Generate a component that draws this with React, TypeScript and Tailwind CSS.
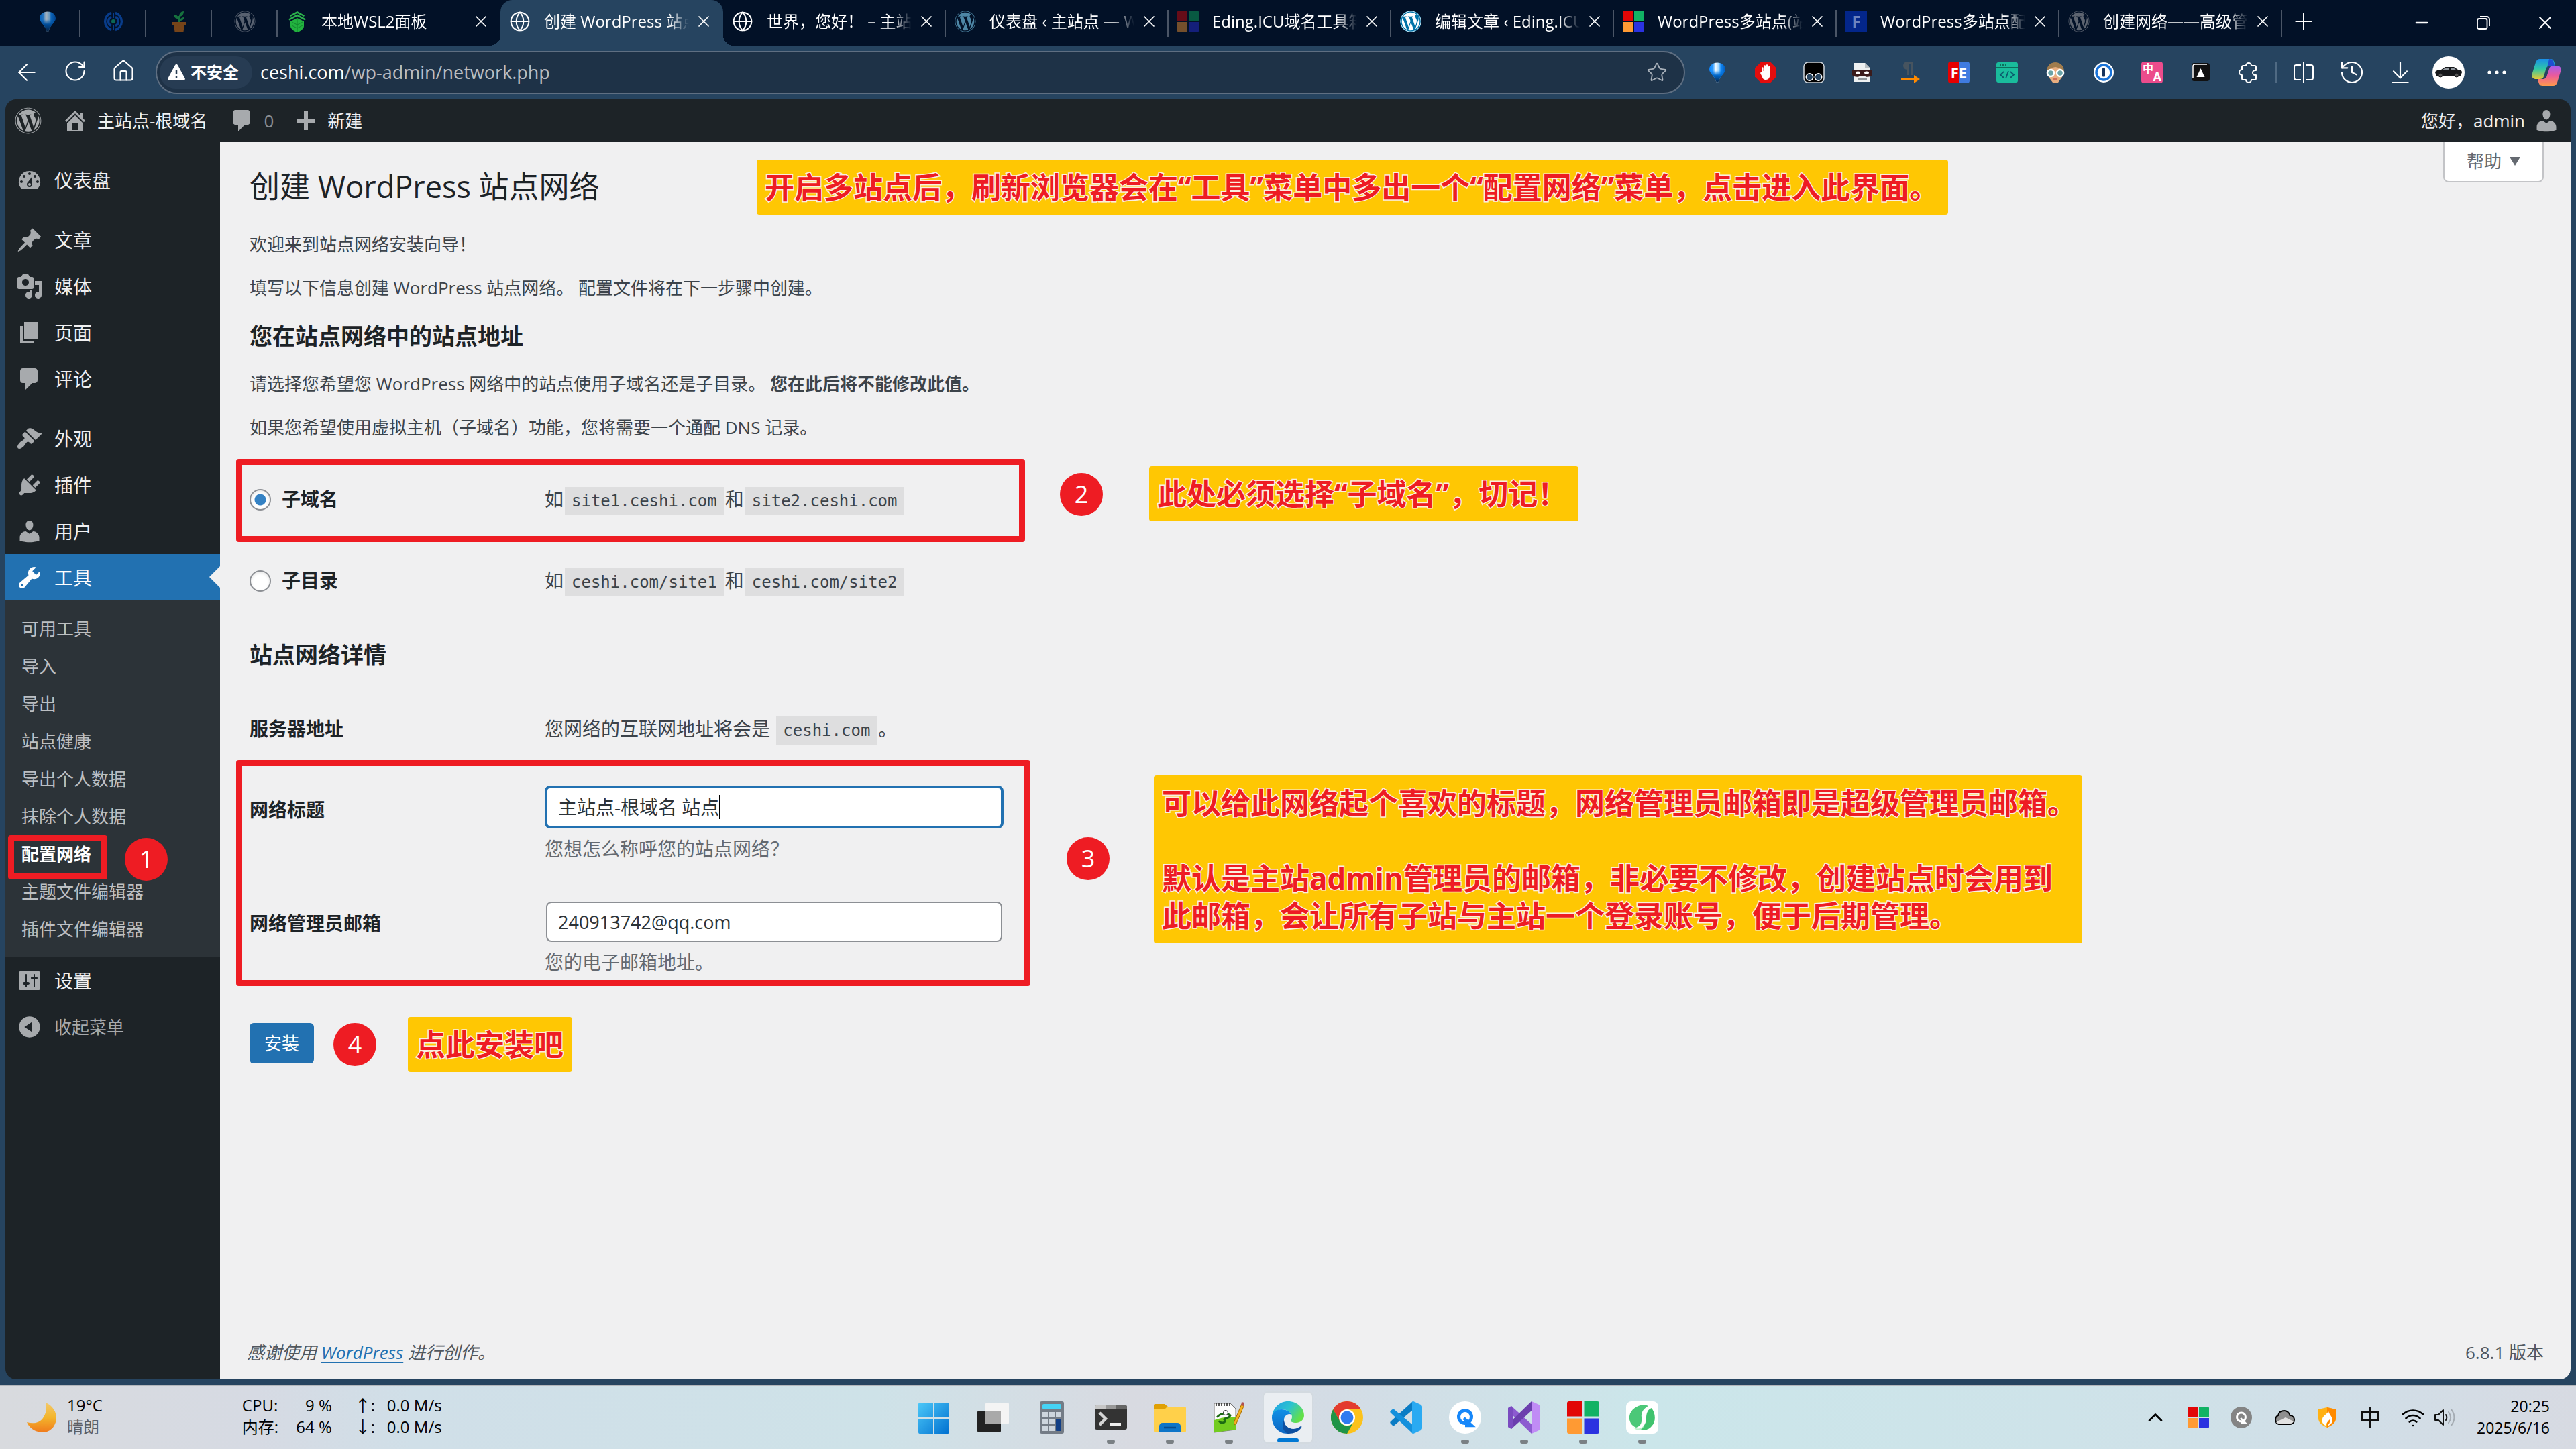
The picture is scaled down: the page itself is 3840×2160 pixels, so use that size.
import React from "react";
import { FaWordpress } from "react-icons/fa";
import { ArrowLeft, RotateCw, Home, Globe, X, Plus, Star, History, ArrowDownToLine, Minus, ChevronUp, Wifi } from "lucide-react";

const SANS = "font-['Open_Sans','Noto_Sans_CJK_SC',sans-serif]";

/* ---------- admin glyphs, 20 x 20 grid ---------- */
const G = {
  dashboard:
    "M3.76 16h12.48A7.998 7.998 0 0 0 10 3a7.998 7.998 0 0 0-6.24 13zM10 4c.55 0 1 .45 1 1s-.45 1-1 1-1-.45-1-1 .45-1 1-1zM6 6c.55 0 1 .45 1 1s-.45 1-1 1-1-.45-1-1 .45-1 1-1zm8 0c.55 0 1 .45 1 1s-.45 1-1 1-1-.45-1-1 .45-1 1-1zm-5.37 5.55L12 7v6c0 1.1-.9 2-2 2s-2-.9-2-2c0-.57.24-1.08.63-1.45zM4 10c.55 0 1 .45 1 1s-.45 1-1 1-1-.45-1-1 .45-1 1-1zm12 0c.55 0 1 .45 1 1s-.45 1-1 1-1-.45-1-1 .45-1 1-1zm-5 3c0-.55-.45-1-1-1s-1 .45-1 1 .45 1 1 1 1-.45 1-1z",
  post: "M10.44 3.02l1.82-1.82 6.36 6.35-1.83 1.82c-1.05-.68-2.48-.57-3.41.36l-.75.75c-.92.93-1.04 2.35-.35 3.41l-1.83 1.82-2.41-2.41-2.8 2.79c-.42.42-3.38 2.71-3.8 2.29s1.86-3.39 2.28-3.81l2.79-2.79L4.1 9.36l1.83-1.82c1.05.69 2.48.57 3.4-.36l.75-.75c.93-.92 1.05-2.35.36-3.41z",
  media:
    "M13 11V4c0-.55-.45-1-1-1h-1.67L9 1H5L3.67 3H2c-.55 0-1 .45-1 1v7c0 .55.45 1 1 1h10c.55 0 1-.45 1-1zM7 4.5c1.38 0 2.5 1.12 2.5 2.5S8.38 9.5 7 9.5 4.5 8.38 4.5 7 5.62 4.5 7 4.5zM14 6h5v10.5c0 1.38-1.12 2.5-2.5 2.5S14 17.88 14 16.5s1.12-2.5 2.5-2.5c.17 0 .34.02.5.05V9h-3V6zm-4 8.05V13h2v3.5c0 1.38-1.12 2.5-2.5 2.5S7 17.88 7 16.5 8.12 14 9.5 14c.17 0 .34.02.5.05z",
  page: "M6 15V2h10v13H6zm-1 1h8v2H3V5h2v11z",
  comments: "M5 2h9c1.1 0 2 .9 2 2v7c0 1.1-.9 2-2 2h-2l-5 5v-5H5c-1.1 0-2-.9-2-2V4c0-1.1.9-2 2-2z",
  appearance:
    "M14.48 11.06L7.41 3.99l1.5-1.5c.5-.56 2.3-.47 3.51.32 1.21.8 1.43 1.28 2.91 2.1 1.18.64 2.45 1.26 4.45.85zm-.71.71L6.7 4.7 4.93 6.47c-.39.39-.39 1.02 0 1.41l1.06 1.06c.39.39.39 1.03 0 1.42-.6.6-1.43 1.11-2.21 1.69-.35.26-.7.53-1.01.84C1.43 14.23.4 16.08 1.4 17.07c.99 1 2.84-.03 4.18-1.36.31-.31.58-.66.85-1.02.57-.78 1.08-1.61 1.69-2.21.39-.39 1.02-.39 1.41 0l1.06 1.06c.39.39 1.02.39 1.41 0z",
  plugins:
    "M13.11 4.36L9.87 7.6 8 5.73l3.24-3.24c.35-.34 1.05-.2 1.56.32.52.51.66 1.21.31 1.55zm-8 1.77l.91-1.12 9.01 9.01-1.19.84c-.71.71-2.63 1.16-3.82 1.16H6.14L4.9 17.26c-.59.59-1.54.59-2.12 0-.59-.58-.59-1.53 0-2.12l1.24-1.24v-3.88c0-1.13.4-3.19 1.09-3.89zm7.26 3.97l3.24-3.24c.34-.35 1.04-.21 1.55.31.52.51.66 1.21.31 1.55l-3.24 3.25z",
  users:
    "M10 9.25c-2.27 0-2.73-3.44-2.73-3.44C7 4.02 7.82 2 9.97 2c2.16 0 2.98 2.02 2.71 3.81 0 0-.41 3.44-2.68 3.44zm0 2.57L12.72 10c2.39 0 4.52 2.33 4.52 4.53v2.49s-3.65 1.13-7.24 1.13c-3.65 0-7.24-1.13-7.24-1.13v-2.49c0-2.25 1.94-4.48 4.47-4.48z",
  tools:
    "M16.68 9.77c-1.34 1.34-3.3 1.67-4.95.99l-5.41 6.52c-.99.99-2.59.99-3.58 0s-.99-2.59 0-3.57l6.52-5.42c-.68-1.65-.35-3.61.99-4.95 1.28-1.28 3.12-1.62 4.72-1.06l-2.89 2.89 2.82 2.82 2.86-2.87c.53 1.58.18 3.39-1.08 4.65zM3.81 16.21c.4.39 1.04.39 1.43 0 .4-.4.4-1.04 0-1.43-.39-.4-1.03-.4-1.43 0-.39.39-.39 1.03 0 1.43z",
  settings:
    "M18 16V4c0-.55-.45-1-1-1H3c-.55 0-1 .45-1 1v12c0 .55.45 1 1 1h14c.55 0 1-.45 1-1zM8 11h1c.55 0 1 .45 1 1s-.45 1-1 1H8v1.5c0 .28-.22.5-.5.5s-.5-.22-.5-.5V13H6c-.55 0-1-.45-1-1s.45-1 1-1h1V5.5c0-.28.22-.5.5-.5s.5.22.5.5V11zm5-2h-1c-.55 0-1-.45-1-1s.45-1 1-1h1V5.5c0-.28.22-.5.5-.5s.5.22.5.5V7h1c.55 0 1 .45 1 1s-.45 1-1 1h-1v5.5c0 .28-.22.5-.5.5s-.5-.22-.5-.5V9z",
  collapse:
    "M10 2.16c4.33 0 7.84 3.51 7.84 7.84s-3.51 7.84-7.84 7.84S2.16 14.33 2.16 10 5.71 2.16 10 2.16zm2 11.72V6.12L6.18 9.97z",
  home: "M16 8.5l1.53 1.53-1.06 1.06L10 4.6l-6.47 6.47-1.06-1.06L10 2.5l4 4v-2h2v4zm-6-2.46l6 5.99V18H4v-5.97zM12 17v-5H8v5h4z",
  plus: "M17 8.5v3h-5.5V17h-3v-5.5H3v-3h5.5V3h3v5.5z",
};

function Dash({ d, className = "" }: { d: string; className?: string }) {
  return (
    <svg viewBox="0 0 20 20" className={`size-10 shrink-0 ${className}`} fill="currentColor" fillRule="evenodd" aria-hidden="true">
      <path d={d} />
    </svg>
  );
}

/* ---------- small coloured artwork ---------- */
function Balloon() {
  return (
    <svg viewBox="0 0 32 32" className="size-8">
      <defs>
        <linearGradient id="bal" x1="0" x2="1">
          <stop offset="0" stopColor="#0a84ff" />
          <stop offset=".22" stopColor="#2b9bff" />
          <stop offset=".4" stopColor="#f2faff" />
          <stop offset=".6" stopColor="#9ad4ff" />
          <stop offset=".72" stopColor="#1288f5" />
          <stop offset="1" stopColor="#0057b8" />
        </linearGradient>
        <linearGradient id="balTail" x1="0" x2="0" y1="0" y2="1">
          <stop offset=".4" stopColor="#0074e0" stopOpacity="0" />
          <stop offset=".65" stopColor="#0068cc" />
          <stop offset="1" stopColor="#08284c" />
        </linearGradient>
      </defs>
      <path d="M16 1.500c7 0 12 4.500 12 10 0 6-8 9-10.500 19h-3C12 20.500 4 17.500 4 11.500c0-5.500 5-10 12-10z" fill="url(#bal)" />
      <path d="M16 1.500c7 0 12 4.500 12 10 0 6-8 9-10.500 19h-3C12 20.500 4 17.500 4 11.500c0-5.500 5-10 12-10z" fill="url(#balTail)" />
    </svg>
  );
}
function Rings() {
  return (
    <svg viewBox="0 0 32 32" className="size-8" fill="none" stroke="#0b4fb5" strokeWidth="3.4">
      <path d="M13 3.5A13 13 0 0 0 13 28.500M19 3.500A13 13 0 0 1 19 28.500" />
      <path d="M13 9.500a7 7 0 0 0 0 13M19 9.500a7 7 0 0 1 0 13" />
      <circle cx="16" cy="16" r="3" fill="#0e8d6a" stroke="none" />
      <path d="M16 3v8M16 21v8" strokeWidth="2" />
    </svg>
  );
}
function PlantPot() {
  return (
    <svg viewBox="0 0 32 32" className="size-8">
      <path d="M6 17h20v4h-2l-1.500 10h-13L8 21H6z" fill="#a85a14" />
      <path d="M16 17V8" stroke="#1f9a48" strokeWidth="2" />
      <path d="M16 9c0-5 3-8 7-8 0 5-3 8-7 8zM15 12c-5 0-6-2-7-6 4 0 7 2 7 6zM17 15c0-3 3-5 7-5-1 3-3 5-7 5z" fill="#1f9a48" />
    </svg>
  );
}
function PineLeaf() {
  return (
    <svg viewBox="0 0 32 32" className="size-8">
      <path d="M16 1l11 6-1 2-10-5-10 5-1-2zM16 5.500l13 7-1.500 2L16 8.500l-11.500 6-1.500-2z" fill="#2bb24c" />
      <path d="M16 11l10 5v7c0 4-6 8-10 9-4-1-10-5-10-9v-7z" fill="#22b33f" />
      <path d="M16 11v21M8 17l8 4 8-4M8 22l8 4 8-4" stroke="#12862d" fill="none" />
    </svg>
  );
}
function FourSquares({ dim = false, className = "size-8" }: { dim?: boolean; className?: string }) {
  return (
    <svg viewBox="0 0 32 32" className={`${className} ${dim ? "opacity-45" : ""}`}>
      <path d="M2 0h13v15H0V2a2 2 0 0 1 2-2z" fill="#e20606" />
      <path d="M17 0h13a2 2 0 0 1 2 2v13H17z" fill="#11b264" />
      <path d="M0 17h15v15H2a2 2 0 0 1-2-2z" fill="#ff9a33" />
      <path d="M17 17h15v13a2 2 0 0 1-2 2H17z" fill="#2b32e0" />
    </svg>
  );
}
function LetterTile() {
  return <span className="flex size-8 items-center justify-center bg-[#03268a] text-[24px] leading-8 font-bold text-[#6d82bd]">F</span>;
}

/* ---------- tab strip ---------- */
type TabT = { icon: React.ReactNode; title: string; active?: boolean; divider?: boolean };
const TABS: TabT[] = [
  { icon: <PineLeaf />, title: "本地WSL2面板" },
  { icon: <Globe className="size-8" strokeWidth={1.5} />, title: "创建 WordPress 站点", active: true },
  { icon: <Globe className="size-8" strokeWidth={1.5} />, title: "世界，您好！ – 主站", divider: true },
  { icon: <FaWordpress className="size-8 rounded-full text-[#4d86a5]" />, title: "仪表盘 ‹ 主站点 — W", divider: true },
  { icon: <FourSquares dim />, title: "Eding.ICU域名工具箱", divider: true },
  { icon: <FaWordpress className="size-8 rounded-full bg-[#0073a8] text-white" />, title: "编辑文章 ‹ Eding.ICU", divider: true },
  { icon: <FourSquares />, title: "WordPress多站点(站", divider: true },
  { icon: <LetterTile />, title: "WordPress多站点配", divider: true },
  { icon: <FaWordpress className="size-8 text-[#5d6470]" />, title: "创建网络——高级管", divider: true },
];

function Divider() {
  return <span className="absolute top-[15px] right-0 h-10 w-0.5 bg-[#4a5566]" />;
}

function TabStrip() {
  const pinned = [<Balloon key="a" />, <Rings key="b" />, <PlantPot key="c" />, <FaWordpress key="d" className="size-8 text-[#7d848f]" />];
  return (
    <div className="flex h-[68px] items-stretch bg-[#021127] text-white">
      <div className="flex pl-[22px]">
        {pinned.map((p, i) => (
          <button key={i} type="button" aria-label={`固定标签 ${i + 1}`} className="relative flex w-[98px] items-center justify-center pb-1">
            <span className="opacity-70">{p}</span>
            <Divider />
          </button>
        ))}
      </div>
      <div className="flex flex-1" role="tablist">
        {TABS.map((t) => (
          <div
            key={t.title}
            role="tab"
            aria-selected={!!t.active}
            className={`relative flex w-[332px] items-center pb-1 pl-[13px] ${t.active ? "rounded-t-[18px] bg-[#264460]" : ""}`}
          >
            {t.active && (
              <>
                <span className="absolute bottom-0 -left-4 size-4 bg-[radial-gradient(circle_at_0_0,transparent_16px,#264460_16px)]" />
                <span className="absolute -right-4 bottom-0 size-4 bg-[radial-gradient(circle_at_100%_0,transparent_16px,#264460_16px)]" />
              </>
            )}
            <span className="flex w-8 shrink-0">{t.icon}</span>
            <span className="ml-5 w-[216px] overflow-hidden text-[24px] leading-9 whitespace-nowrap [mask-image:linear-gradient(90deg,#000_86%,transparent)]">
              {t.title}
            </span>
            <button type="button" aria-label="关闭标签页" className="ml-2 flex size-7 items-center justify-center">
              <X className="size-7" strokeWidth={1.5} />
            </button>
            {t.divider && <Divider />}
          </div>
        ))}
        <button type="button" aria-label="新建标签页" className="ml-2 flex w-12 items-center justify-center pb-1">
          <Plus className="size-10" strokeWidth={1.2} />
        </button>
      </div>
      <div className="flex">
        <button type="button" aria-label="最小化" className="flex w-[92px] items-center justify-center">
          <Minus className="size-7" strokeWidth={2} />
        </button>
        <button type="button" aria-label="还原" className="flex w-[92px] items-center justify-center">
          <svg viewBox="0 0 20 20" className="size-5" fill="none" stroke="currentColor" strokeWidth="1.800">
            <rect x="1" y="4" width="14.500" height="15" rx="2.500" />
            <path d="M5 1h10a4 4 0 0 1 4 4v10" />
          </svg>
        </button>
        <button type="button" aria-label="关闭" className="flex w-[92px] items-center justify-center">
          <X className="size-8" strokeWidth={1.4} />
        </button>
      </div>
    </div>
  );
}

/* ---------- browser extensions ---------- */
const EXT: [string, React.ReactNode][] = [
  ["图钉", <Balloon key="0" />],
  [
    "拦截器",
    <svg key="1" viewBox="0 0 32 32" className="size-8">
      <path d="M9.500 0h13L32 9.500v13L22.500 32h-13L0 22.500v-13z" fill="#e40d0d" />
      <path d="M10 15V9.500a1.300 1.300 0 0 1 2.600 0V14h.7V6.500a1.300 1.300 0 0 1 2.700 0V14h.7V5.500a1.300 1.300 0 0 1 2.600 0V14h.7V8a1.300 1.300 0 0 1 2.600 0v9.500C22.600 23 21 27 16.500 27c-3.600 0-5-2-6-5l-2.500-5c.5-1.500 2-1.200 2-2z" fill="#fff" />
    </svg>,
  ],
  [
    "脚本管理",
    <svg key="2" viewBox="0 0 32 32" className="size-8">
      <rect x="1" y="1" width="30" height="30" rx="6" fill="#000" stroke="#cfd6dd" strokeWidth="1.500" />
      <circle cx="9.500" cy="23" r="5.200" fill="#264460" stroke="#fff" strokeWidth="1.500" />
      <circle cx="22.500" cy="23" r="5.200" fill="#264460" stroke="#fff" strokeWidth="1.500" />
    </svg>,
  ],
  [
    "面具",
    <svg key="3" viewBox="0 0 32 32" className="size-8">
      <path d="M4 2h16l7 7v21H4z" fill="#eef1f2" />
      <path d="M20 2l7 7h-7z" fill="#b9c0c4" />
      <path d="M1 12h30v8c-2 3-10 4-12 1h-6c-2 3-10 2-12-1z" fill="#3a1b1b" />
      <ellipse cx="9.500" cy="16.500" rx="3.500" ry="2" fill="#fff" />
      <ellipse cx="22.500" cy="16.500" rx="3.500" ry="2" fill="#fff" />
      <path d="M9 25h14v3H9z" fill="#90979b" />
    </svg>,
  ],
  [
    "段落",
    <svg key="4" viewBox="0 0 32 32" className="size-8">
      <path d="M20 0v20h-3V3h-3v17h-3V12a6 6 0 0 1 0-12z" fill="#47545f" />
      <path d="M2 24.500h19V20l9 6-9 6v-4.500H2z" fill="#ff8a00" />
    </svg>,
  ],
  [
    "FE",
    <span key="5" className="flex size-8 items-center justify-center rounded bg-[linear-gradient(90deg,#e60000_50%,#3f7be0_50%)] text-[22px] leading-8 font-bold text-white">FE</span>,
  ],
  [
    "代码",
    <svg key="6" viewBox="0 0 32 32" className="size-8">
      <rect y="1" width="32" height="30" rx="3" fill="#1abc9c" />
      <path d="M0 9h32M5 5h2M9 5h2M13 5h2" stroke="#0e6d5b" strokeWidth="2" />
      <path d="M11 15l-5 4.500 5 4.500M21 15l5 4.500-5 4.500M18 14l-4 11" stroke="#0b5b6d" strokeWidth="1.800" fill="none" />
    </svg>,
  ],
  [
    "头像",
    <svg key="7" viewBox="0 0 32 32" className="size-8">
      <path d="M4 14C4 5 9 2 16 2s12 3 12 12l-2 9-6 8h-8l-6-8z" fill="#e8ae80" />
      <path d="M3 15C3 6 9 1 16 1s13 5 13 14h-3c-1-4-3-6-10-7-7 1-9 3-10 7z" fill="#a07c4d" />
      <circle cx="9" cy="17" r="5" fill="#6aa3a8" stroke="#fff" strokeWidth="2.500" />
      <circle cx="23" cy="17" r="5" fill="#6aa3a8" stroke="#fff" strokeWidth="2.500" />
      <path d="M13 26h6" stroke="#c9574f" strokeWidth="1.500" />
    </svg>,
  ],
  [
    "密码",
    <svg key="8" viewBox="0 0 32 32" className="size-8">
      <circle cx="16" cy="16" r="15" fill="#fff" />
      <circle cx="16" cy="16" r="11" fill="#fff" stroke="#1a73d8" strokeWidth="3.500" />
      <rect x="14" y="9.500" width="4" height="13" rx="1" fill="#16325c" />
    </svg>,
  ],
  [
    "翻译",
    <span key="9" className="relative flex size-8 rounded bg-[#ec4c8c] font-bold text-white">
      <span className="absolute top-0 left-0.5 text-[16px] leading-5">中</span>
      <span className="absolute right-0.5 bottom-0 text-[18px] leading-5">A</span>
    </span>,
  ],
  [
    "标记",
    <svg key="10" viewBox="0 0 32 32" className="size-8">
      <rect x="3" y="2" width="27" height="27" rx="4" fill="#111" />
      <path d="M5 25V7a3 3 0 0 1 3-3h18" stroke="#fff" strokeWidth="1.500" fill="none" />
      <path d="M16.500 10l6 13h-12z" fill="#fff" />
    </svg>,
  ],
  [
    "扩展",
    <svg key="11" viewBox="0 0 32 32" className="size-8" fill="none" stroke="#fff" strokeWidth="2" strokeLinejoin="round">
      <path d="M12 6a4 4 0 0 1 8 0h5a2 2 0 0 1 2 2v5h-1.500a3.500 3.500 0 0 0 0 7H27v5a2 2 0 0 1-2 2h-5a4 4 0 0 1-8 0H8a2 2 0 0 1-2-2v-5a4 4 0 0 1 0-8V8a2 2 0 0 1 2-2z" />
    </svg>,
  ],
];

function Toolbar() {
  return (
    <div className="flex h-20 items-center bg-[#264460] text-white">
      <div className="flex pl-1">
        <button type="button" aria-label="返回" className="flex w-[72px] justify-center"><ArrowLeft className="size-10" strokeWidth={1.3} /></button>
        <button type="button" aria-label="刷新" className="flex w-[72px] justify-center"><RotateCw className="size-9" strokeWidth={1.4} /></button>
        <button type="button" aria-label="主页" className="flex w-[72px] justify-center"><Home className="size-9" strokeWidth={1.4} /></button>
      </div>
      <div className="ml-3 flex h-16 flex-1 items-center rounded-full border-2 border-[#5f6f82] bg-[#1e3247] pr-6 pl-1">
        <button type="button" className="flex h-12 w-[138px] items-center gap-2 rounded-full bg-[#273c53] pl-3 text-[24px] leading-8 font-bold">
          <svg viewBox="0 0 26 24" className="h-6 w-[26px]">
            <path d="M13 0c.9 0 1.600.5 2 1.200l10.600 19.500c.8 1.500-.2 3.300-2 3.300H2.400C.6 24-.4 22.200.4 20.700L11 1.200C11.400.5 12.100 0 13 0z" fill="#fff" />
            <path d="M13 8v7M13 18v2.500" stroke="#273c53" strokeWidth="2.500" />
          </svg>
          不安全
        </button>
        <div className="ml-3 flex-1 text-[27px] leading-9 text-[#b9bdc2]">
          <span className="text-white">ceshi.com</span>/wp-admin/network.php
        </div>
        <button type="button" aria-label="收藏"><Star className="size-8 text-[#aab2bb]" strokeWidth={1.4} /></button>
      </div>
      <div className="ml-3 flex">
        {EXT.map(([name, el]) => (
          <button key={name} type="button" aria-label={name} className="flex h-12 w-[72px] items-center justify-center">{el}</button>
        ))}
      </div>
      <span className="mx-1 h-8 w-0.5 bg-[#4f6a83]" />
      <button type="button" aria-label="分屏" className="flex w-[72px] justify-center">
        <svg viewBox="0 0 32 32" className="size-8" fill="none" stroke="currentColor" strokeWidth="2">
          <path d="M16 1v30M12 5H5a3 3 0 0 0-3 3v16a3 3 0 0 0 3 3h7M20 5h7a3 3 0 0 1 3 3v16a3 3 0 0 1-3 3h-7" />
        </svg>
      </button>
      <button type="button" aria-label="历史记录" className="flex w-[72px] justify-center"><History className="size-10" strokeWidth={1.3} /></button>
      <button type="button" aria-label="下载" className="flex w-[72px] justify-center"><ArrowDownToLine className="size-10" strokeWidth={1.3} /></button>
      <button type="button" aria-label="用户" className="flex w-[72px] justify-center">
        <svg viewBox="0 0 48 48" className="size-12">
          <circle cx="24" cy="24" r="24" fill="#fff" />
          <path d="M4 24c1-3 5-4 9-4l6-4h13l6 4c4 0 6 2 6 4l-2 5H6z" fill="#15171a" />
          <path d="M15 20l5-3h5v3zM27 17h4l4 3h-8z" fill="#8d949b" />
          <circle cx="12" cy="28" r="3" fill="#555" stroke="#15171a" />
          <circle cx="36" cy="28" r="3" fill="#555" stroke="#15171a" />
        </svg>
      </button>
      <button type="button" aria-label="更多" className="flex w-[72px] justify-center">
        <svg viewBox="0 0 32 8" className="h-2 w-8" fill="currentColor">
          <circle cx="5" cy="4" r="2.600" /><circle cx="16" cy="4" r="2.600" /><circle cx="27" cy="4" r="2.600" />
        </svg>
      </button>
      <button type="button" aria-label="Copilot" className="mr-0.5 flex w-[80px] justify-center pr-1">
        <svg viewBox="0 0 44 40" className="h-10 w-11">
          <defs>
            <linearGradient id="cpA" x1="0" y1="0" x2="0" y2="1">
              <stop offset="0" stopColor="#1a8fe8" /><stop offset=".5" stopColor="#2fc8a5" /><stop offset="1" stopColor="#e8c935" />
            </linearGradient>
            <linearGradient id="cpB" x1="0" y1="0" x2="0" y2="1">
              <stop offset="0" stopColor="#a45df0" /><stop offset=".5" stopColor="#ec5a9a" /><stop offset="1" stopColor="#ff9b4a" />
            </linearGradient>
          </defs>
          <path d="M12 0h16c4 0 5 3 6 6l1 4h-7c-4 0-6 2-7 6l-3 10c-1 3-3 4-6 4H7c-5 0-8-3-6-9L6 5c1-3 3-5 6-5z" fill="url(#cpA)" />
          <path d="M32 40H16c-4 0-5-3-6-6l-1-4h7c4 0 6-2 7-6l3-9c1-4 3-5 6-5h5c5 0 8 3 6 9l-5 16c-1 3-3 5-6 5z" fill="url(#cpB)" />
          <path d="M26 0c4 0 6 3 7 6l1 4h-6c-2 0-4 1-5 3z" fill="#1f4fd0" />
        </svg>
      </button>
    </div>
  );
}

/* ---------- admin page ---------- */
function AdminBar() {
  return (
    <header className="flex h-16 items-center bg-[#1d2327] text-[26px] leading-10 text-[#f0f0f1]">
      <a href="#wp" aria-label="关于 WordPress" className="ml-[14px] text-[#a7aaad]"><FaWordpress className="size-10" /></a>
      <a href="#site" className="ml-[30px] flex items-center gap-[13px]"><Dash d={G.home} className="text-[#a7aaad]" />主站点-根域名</a>
      <a href="#comments" className="ml-8 flex items-center gap-3 text-[#8c8f94]"><Dash d={G.comments} className="text-[#a7aaad]" />0</a>
      <a href="#new" className="ml-7 flex items-center gap-3"><Dash d={G.plus} className="text-[#a7aaad]" />新建</a>
      <a href="#me" className="mr-4 ml-auto flex items-center gap-3"><span>您好，admin</span><Dash d={G.users} className="text-[#a7aaad]" /></a>
    </header>
  );
}

function MenuItem({ d, label, active }: { d: string; label: string; active?: boolean }) {
  return (
    <li>
      <a href="#menu" aria-current={active ? "true" : undefined} className={`relative flex h-[69px] items-center gap-[17px] pl-4 text-[28px] leading-9 ${active ? "bg-[#2271b1] text-white" : "text-[#f0f0f1]"}`}>
        <Dash d={d} className={active ? "text-white" : "text-[#a7aaad]"} />
        {label}
        {active && <span className="absolute top-[18px] right-0 border-y-[16px] border-r-[16px] border-y-transparent border-r-[#f0f0f1]" />}
      </a>
    </li>
  );
}

const SUB = ["可用工具", "导入", "导出", "站点健康", "导出个人数据", "抹除个人数据", "配置网络", "主题文件编辑器", "插件文件编辑器"];

function Sidebar() {
  return (
    <nav className="relative w-80 shrink-0 bg-[#1d2327] pt-[22px]">
      <ul>
        <MenuItem d={G.dashboard} label="仪表盘" />
        <li className="h-5" />
        <MenuItem d={G.post} label="文章" />
        <MenuItem d={G.media} label="媒体" />
        <MenuItem d={G.page} label="页面" />
        <MenuItem d={G.comments} label="评论" />
        <li className="h-5" />
        <MenuItem d={G.appearance} label="外观" />
        <MenuItem d={G.plugins} label="插件" />
        <MenuItem d={G.users} label="用户" />
        <MenuItem d={G.tools} label="工具" active />
        <li>
          <ul className="bg-[#2c3338] py-[14px]">
            {SUB.map((s) => (
              <li key={s}>
                <a href="#sub" className={`flex h-14 items-center pl-6 text-[26px] leading-9 ${s === "配置网络" ? "font-bold text-white" : "text-[#bcbfc2]"}`}>{s}</a>
              </li>
            ))}
          </ul>
        </li>
        <MenuItem d={G.settings} label="设置" />
        <li>
          <button type="button" className="flex h-[69px] items-center gap-[17px] pl-4 text-[26px] leading-9 text-[#a7aaad]">
            <Dash d={G.collapse} />收起菜单
          </button>
        </li>
      </ul>
      <Frame className="top-[1033px] left-1 h-[66px] w-[148px]" />
      <Dot n={1} className="top-[1037px] left-[178px]" />
    </nav>
  );
}

/* Annotation marks laid over the page */
function Frame({ className }: { className: string }) {
  return <div className={`pointer-events-none absolute rounded border-[9px] border-[#ee1c23] ${className}`} />;
}
function Dot({ n, className }: { n: number; className: string }) {
  return (
    <span className={`absolute flex size-16 items-center justify-center rounded-full bg-[#ee1c23] text-[36px] leading-none text-white ${className}`}>{n}</span>
  );
}
function Note({ className, children }: { className: string; children: React.ReactNode }) {
  return (
    <div className={`absolute rounded bg-[#ffc703] px-3 py-[13px] text-[44px] leading-[56px] font-bold text-[#ee1c23] [paint-order:stroke_fill] [-webkit-text-stroke:3px_#fbeee0] ${className}`}>
      {children}
    </div>
  );
}

function Code({ children }: { children: React.ReactNode }) {
  return <code className="mx-0.5 bg-[#dededf] px-[10px] py-[7px] font-['DejaVu_Sans_Mono',monospace] text-[24px] leading-none">{children}</code>;
}

const TH = "w-[440px] py-[42px] pr-5 text-left align-top text-[28px] leading-[37px] font-bold text-[#1d2327]";

function RadioRow({ id, label, a, b, checked }: { id: string; label: string; a: string; b: string; checked?: boolean }) {
  return (
    <tr>
      <th scope="row" className={TH}>
        <label htmlFor={id} className="flex items-center gap-4">
          <input
            id={id}
            type="radio"
            name="subdomain"
            defaultChecked={checked}
            className="size-8 appearance-none rounded-full border-2 border-[#8c8f94] bg-white shadow-[inset_0_2px_4px_rgba(0,0,0,0.1)] checked:bg-[radial-gradient(circle,#3582c4_8px,transparent_9px)]"
          />
          {label}
        </label>
      </th>
      <td className="align-top py-[42px] text-[28px] leading-[37px]">
        如<Code>{a}</Code>和<Code>{b}</Code>
      </td>
    </tr>
  );
}

function Main() {
  return (
    <main className="relative flex flex-1 flex-col bg-[#f0f0f1] pl-11 text-[26px] leading-10 text-[#3c434a]">
      <button type="button" className="absolute top-0 right-10 flex h-[60px] w-[150px] items-center justify-center gap-3 rounded-b-lg border-2 border-t-0 border-[#c3c4c7] bg-white pb-0.5 text-[26px] leading-9 text-[#646970]">
        帮助
        <span className="border-x-8 border-t-[13px] border-x-transparent border-t-[#646970]" />
      </button>

      <h1 className="mt-9 text-[45px] leading-[60px] text-[#1d2327]">创建 WordPress 站点网络</h1>
      <p className="mt-9">欢迎来到站点网络安装向导！</p>
      <p className="mt-[25px]">填写以下信息创建 WordPress 站点网络。 配置文件将在下一步骤中创建。</p>
      <h2 className="mt-8 text-[34px] leading-10 font-bold text-[#1d2327]">您在站点网络中的站点地址</h2>
      <p className="mt-[31px]">请选择您希望您 WordPress 网络中的站点使用子域名还是子目录。 <strong className="font-bold">您在此后将不能修改此值。</strong></p>
      <p className="mt-[25px]">如果您希望使用虚拟主机（子域名）功能，您将需要一个通配 DNS 记录。</p>

      <table className="mt-[27px] w-full border-collapse">
        <tbody>
          <RadioRow id="r1" label="子域名" a="site1.ceshi.com" b="site2.ceshi.com" checked />
          <RadioRow id="r2" label="子目录" a="ceshi.com/site1" b="ceshi.com/site2" />
        </tbody>
      </table>

      <h2 className="mt-[30px] text-[34px] leading-10 font-bold text-[#1d2327]">站点网络详情</h2>
      <table className="mt-[30px] w-full border-collapse">
        <tbody>
          <tr>
            <th scope="row" className={TH}>服务器地址</th>
            <td className="align-top py-[42px] text-[28px] leading-[37px]">您网络的互联网地址将会是 <Code>ceshi.com</Code>。</td>
          </tr>
          <tr>
            <th scope="row" className={TH}><label htmlFor="sitename">网络标题</label></th>
            <td className="pt-6 pb-8 align-top text-[28px] leading-[37px]">
              <div className="flex h-16 w-[684px] items-center rounded-lg border-4 border-[#2271b1] bg-white pl-4 text-[#2c3338]">
                <input id="sitename" type="text" defaultValue="主站点-根域名 站点" className="field-sizing-content outline-none" />
                <span className="h-9 w-0.5 bg-black" />
              </div>
              <p className="mt-3 leading-[37px] text-[#646970]">您想怎么称呼您的站点网络？</p>
            </td>
          </tr>
          <tr>
            <th scope="row" className={TH}><label htmlFor="email">网络管理员邮箱</label></th>
            <td className="pt-7 pb-8 align-top text-[28px] leading-[37px]">
              <input id="email" type="text" defaultValue="240913742@qq.com" className="ml-0.5 block h-[60px] w-[680px] rounded-lg border-2 border-[#8c8f94] bg-white px-4 text-[27px] text-[#2c3338] outline-none" />
              <p className="mt-3 leading-[37px] text-[#646970]">您的电子邮箱地址。</p>
            </td>
          </tr>
        </tbody>
      </table>
      <button type="submit" className="mt-10 h-[60px] w-24 rounded-md bg-[#2271b1] text-[26px] leading-9 text-white">安装</button>

      <footer className="mt-auto -ml-1 flex justify-between pr-10 pb-5 text-[#50575e]">
        <p className="italic">感谢使用 <a href="#wordpress" className="text-[#2271b1] underline decoration-2 underline-offset-4">WordPress</a> 进行创作。</p>
        <p>6.8.1 版本</p>
      </footer>

      <Frame className="top-[472px] left-6 h-[124px] w-[1176px]" />
      <Frame className="top-[921px] left-6 h-[337px] w-[1184px]" />
      <Dot n={2} className="top-[493px] left-[1252px]" />
      <Dot n={3} className="top-[1036px] left-[1262px]" />
      <Dot n={4} className="top-[1313px] left-[169px]" />
      <Note className="top-[26px] left-[800px] w-[1776px] whitespace-nowrap">开启多站点后，刷新浏览器会在“工具”菜单中多出一个“配置网络”菜单，点击进入此界面。</Note>
      <Note className="top-[483px] left-[1385px] w-[640px] whitespace-nowrap">此处必须选择“子域名”，切记！</Note>
      <Note className="top-[944px] left-[1392px] w-[1384px] whitespace-nowrap">
        可以给此网络起个喜欢的标题，网络管理员邮箱即是超级管理员邮箱。
        <br />
        <br />
        默认是主站admin管理员的邮箱，非必要不修改，创建站点时会用到
        <br />
        此邮箱，会让所有子站与主站一个登录账号，便于后期管理。
      </Note>
      <Note className="top-[1304px] left-[280px] w-[245px] whitespace-nowrap">点此安装吧</Note>
    </main>
  );
}

/* ---------- taskbar ---------- */
const APPS: { name: string; el: React.ReactNode; run?: boolean; active?: boolean }[] = [
  {
    name: "开始",
    el: (
      <svg viewBox="0 0 48 48" className="size-12">
        <defs><linearGradient id="win" x1="0" y1="0" x2="1" y2="1"><stop offset="0" stopColor="#4cc8f8" /><stop offset="1" stopColor="#0070d0" /></linearGradient></defs>
        <path d="M3 2h20v22H1V4a2 2 0 0 1 2-2zM25 2h20a2 2 0 0 1 2 2v20H25zM1 26h22v22H3a2 2 0 0 1-2-2zM25 26h22v20a2 2 0 0 1-2 2H25z" fill="url(#win)" />
      </svg>
    ),
  },
  {
    name: "任务视图",
    el: (
      <svg viewBox="0 0 48 48" className="size-12">
        <rect x="1" y="14" width="35" height="32" rx="2" fill="#222" />
        <rect x="13" y="2" width="35" height="32" rx="2" fill="#f4f4f4" />
        <path d="M13 14h23v20H15a2 2 0 0 1-2-2z" fill="#a9a9a9" />
      </svg>
    ),
  },
  {
    name: "计算器",
    el: (
      <svg viewBox="0 0 48 48" className="size-12">
        <rect x="6" width="36" height="48" rx="3" fill="#747c86" />
        <rect x="10" y="4" width="28" height="8" rx="2" fill="#45d3f5" />
        <path d="M10 16h8v8h-8zM20 16h8v8h-8zM30 16h8v8h-8zM10 26h8v8h-8zM20 26h8v8h-8zM10 36h8v8h-8zM20 36h8v8h-8z" fill="#cdd5dd" />
        <rect x="30" y="26" width="8" height="18" rx="1" fill="#123f86" />
      </svg>
    ),
  },
  {
    name: "终端",
    run: true,
    el: (
      <svg viewBox="0 0 48 48" className="size-12">
        <rect y="6" width="48" height="36" rx="3" fill="#333" />
        <path d="M2 6h14v6H0V8a2 2 0 0 1 2-2z" fill="#c6c6c6" /><path d="M16 6h16v6H16z" fill="#989898" /><path d="M32 6h14a2 2 0 0 1 2 2v4H32z" fill="#666" />
        <path d="M7 17l9 9-9 9" stroke="#d4d4d4" strokeWidth="4.500" fill="none" />
        <rect x="23" y="32" width="16" height="5" fill="#eee" />
      </svg>
    ),
  },
  {
    name: "文件资源管理器",
    run: true,
    el: (
      <svg viewBox="0 0 48 48" className="size-12">
        <path d="M2 4h14l5 4v6H0V6a2 2 0 0 1 2-2z" fill="#e0a004" />
        <path d="M20 8h26a2 2 0 0 1 2 2v34a2 2 0 0 1-2 2H2a2 2 0 0 1-2-2V12h16z" fill="#ffd04a" />
        <path d="M8 46V37a5 5 0 0 1 5-5h22a5 5 0 0 1 5 5v9z" fill="#0d74c8" />
        <path d="M15 39h18" stroke="#074a8c" strokeWidth="2.500" />
      </svg>
    ),
  },
  {
    name: "记事本",
    run: true,
    el: (
      <svg viewBox="0 0 48 48" className="size-12">
        <path d="M2 3h24l8 8v31L2 46z" fill="#fbfbfb" stroke="#777" />
        <path d="M5 3v4M9 3v4M13 3v4M17 3v4M21 3v4M25 3v4" stroke="#222" strokeWidth="1.500" />
        <path d="M2 28c12-4 22-6 32-4v18L2 46z" fill="#72cc1f" />
        <path d="M6 24c4-6 14-8 20-3-2 5-8 3-9 6 4 5-5 7-8 2" stroke="#1c6b12" strokeWidth="3" fill="none" />
        <circle cx="19" cy="17" r="3.500" fill="#fff" stroke="#222" />
        <path d="M43 4l4 1-12 28-3 2-.5-4z" fill="#f4b020" stroke="#a86c00" />
        <path d="M43 1l4 1-1 5-4-1z" fill="#b05050" />
      </svg>
    ),
  },
  {
    name: "Edge",
    active: true,
    el: (
      <svg viewBox="0 0 48 48" className="size-12">
        <defs>
          <linearGradient id="eg" x1="0" y1="0" x2="1" y2=".5"><stop offset="0" stopColor="#1f9de8" /><stop offset=".55" stopColor="#2cc3cf" /><stop offset="1" stopColor="#62e04a" /></linearGradient>
          <linearGradient id="eb" x1="0" y1="0" x2="0" y2="1"><stop offset="0" stopColor="#1190e6" /><stop offset="1" stopColor="#0b66c3" /></linearGradient>
        </defs>
        <path d="M0 24C1 10 11 0 24 0c14 0 24 10 24 21 0 7-6 11-12 11-5 0-8-2-8-3 0-2 2-2 2-6C30 16 22 12 15 12 7 12 2 17 0 24z" fill="url(#eg)" />
        <path d="M0 24c0-7 6-12 14-12 8 0 14 4 15 8-4-3-11 1-11 8 0 9 9 15 18 13-4 4-8 7-13 7C10 48 0 37 0 24z" fill="url(#eb)" />
        <path d="M18 28c0 8 7 13 14 13 5 0 9-3 11-4 1 0 2 0 1 2-4 6-11 9-20 9-6-3-11-10-6-20z" fill="#0c4fa0" />
      </svg>
    ),
  },
  {
    name: "Chrome",
    el: (
      <svg viewBox="0 0 48 48" className="size-12">
        <circle cx="24" cy="24" r="24" fill="#fcc21b" />
        <path d="M3.200 12A24 24 0 0 1 44.800 12H24a12 12 0 0 0-10.400 6L13 29z" fill="#e33b2e" />
        <path d="M3.200 12A24 24 0 0 0 24 48l10.400-18A12 12 0 0 1 13.600 30z" fill="#1f9447" />
        <circle cx="24" cy="24" r="12" fill="#fff" /><circle cx="24" cy="24" r="9.500" fill="#2f7bf0" />
      </svg>
    ),
  },
  {
    name: "VS Code",
    el: (
      <svg viewBox="0 0 48 48" className="size-12">
        <path d="M35 0v12L5 37l-4-4c-1-1-1-2 0-3L33 1z" fill="#0a7cc4" />
        <path d="M35 48V36L5 11l-4 3c-1 1-1 2 0 3l32 30z" fill="#1490dc" />
        <path d="M35 0l11 5c1 1 2 2 2 3v32c0 1-1 2-2 3l-11 5c-1 0-2 0-2-2V2c0-2 1-2 2-2z" fill="#2aaaf2" />
      </svg>
    ),
  },
  {
    name: "QuickQ",
    run: true,
    el: (
      <svg viewBox="0 0 48 48" className="size-12">
        <circle cx="24" cy="24" r="24" fill="#fff" />
        <circle cx="24" cy="23" r="9.500" fill="none" stroke="#1687fa" strokeWidth="5" />
        <path d="M22 25l12 11H24" fill="none" stroke="#1687fa" strokeWidth="4.500" />
      </svg>
    ),
  },
  {
    name: "Visual Studio",
    run: true,
    el: (
      <svg viewBox="0 0 48 48" className="size-12">
        <path d="M0 10l5-3 30 27v14L0 14z" fill="#8c5bd0" />
        <path d="M0 38l5 3 30-27V0L0 34z" fill="#6b3fae" />
        <path d="M0 10l5-3 3 5v25l-3 4-5-3z" fill="#7a4bc0" />
        <path d="M35 0l11 5c1 1 2 2 2 3v32c0 1-1 2-2 3l-11 5z" fill="#c08cf5" />
      </svg>
    ),
  },
  { name: "色块", run: true, el: <FourSquares className="size-12" /> },
  {
    name: "S",
    run: true,
    el: (
      <svg viewBox="0 0 48 48" className="size-12">
        <rect width="48" height="48" rx="8" fill="#fff" />
        <path d="M33 7C22 2 7 10 5 22c-1 8 3 14 10 17 7-2 9-8 8-15-1-8 3-13 10-17z" fill="#4bc878" />
        <path d="M38 10c6 8 7 20 0 27-5 6-13 7-20 5 8-3 12-9 12-17 0-7 2-13 8-15z" fill="#3fc36e" />
        <path d="M10 38c6 4 14 3 17-3-2 8-10 11-17 3z" fill="#b8f0c8" />
      </svg>
    ),
  },
];

function Taskbar() {
  return (
    <footer className="relative flex h-24 items-center justify-between border-t-2 border-[#b3b6bb] bg-[linear-gradient(90deg,#d8dade_0%,#d6dae3_10%,#d0dfe8_16%,#cee2e8_34%,#d8dae1_44%,#d3dce5_52%,#cbe6ea_64%,#cee3e9_80%,#d1dee7_92%,#d7dae2_100%)] text-[24px] leading-8 text-black">
      <div className="flex items-center">
        <svg viewBox="0 0 48 48" className="ml-[38px] size-12">
          <defs><linearGradient id="moon" x1="0" y1="0" x2="0" y2="1"><stop offset="0" stopColor="#f3c86a" /><stop offset=".5" stopColor="#f3b52c" /><stop offset="1" stopColor="#f07a1c" /></linearGradient></defs>
          <path d="M30 2c10 4 17 14 16 25-2 13-12 20-22 19C12 45 5 38 2 31c10 3 19 1 24-6 5-7 6-15 4-23z" fill="url(#moon)" />
        </svg>
        <div className="ml-[14px] pb-1 text-[24px] leading-8">
          <div>19°C</div>
          <div className="text-[#5c6066]">晴朗</div>
        </div>
        <div className="ml-[208px] grid grid-cols-[64px_70px_34px] pb-1 text-[24px] leading-8">
          <span>CPU:</span><span className="text-right">9 %</span><span />
          <span className="whitespace-nowrap">内存:</span><span className="text-right">64 %</span><span />
        </div>
        <div className="grid grid-cols-[48px_auto] pb-1 text-[24px] leading-8 whitespace-nowrap">
          <span>↑:</span><span>0.0 M/s</span>
          <span>↓:</span><span>0.0 M/s</span>
        </div>
      </div>
      <div className="absolute top-0 left-1/2 flex h-full -translate-x-1/2 items-center gap-3">
        {APPS.map((a) => (
          <button key={a.name} type="button" aria-label={a.name} className={`relative flex h-[78px] w-[76px] items-center justify-center rounded-lg ${a.active ? "border-2 border-[#d3dae0] bg-[#eaeef2]" : ""}`}>
            {a.el}
            {a.run && <span className="absolute bottom-0 h-1.5 w-3 rounded-full bg-[#7a8084]" />}
            {a.active && <span className="absolute bottom-0 h-1.5 w-8 rounded-full bg-[#0078d4]" />}
          </button>
        ))}
      </div>
      <div className="flex items-center">
        <button type="button" aria-label="显示隐藏的图标" className="flex w-16 justify-center"><ChevronUp className="size-9" strokeWidth={1.8} /></button>
        <span className="flex w-16 justify-center"><FourSquares /></span>
        <span className="flex w-16 justify-center">
          <svg viewBox="0 0 32 32" className="size-8">
            <circle cx="16" cy="16" r="16" fill="#848484" />
            <circle cx="16" cy="15.500" r="6.500" fill="none" stroke="#fff" strokeWidth="3" />
            <path d="M15 17l7 7h-6" fill="none" stroke="#fff" strokeWidth="2.500" />
          </svg>
        </span>
        <span className="flex w-16 justify-center">
          <svg viewBox="0 0 32 32" className="size-8">
            <path d="M8 26a7 7 0 0 1-1-13c1-5 5-7 9-7s8 3 8.500 7c5 0 6.500 4 6.500 6.500 0 4-3 6.500-6 6.500z" fill="#8f8f8f" stroke="#000" strokeWidth="2" />
            <path d="M4 23l14-7 12 6c-1 2-3 3-5 3H8c-2 0-3-1-4-2z" fill="#e2e2e2" />
          </svg>
        </span>
        <span className="flex w-16 justify-center">
          <svg viewBox="0 0 32 32" className="size-8">
            <path d="M16 1l13 3v13c0 7-6 11-13 14C9 28 3 24 3 17V4z" fill="#ffb114" />
            <path d="M16 1l13 3v13c0 7-6 11-13 14z" fill="#ff8a00" />
            <path d="M18 6c0 5 7 9 6 15-1 5-5 7-8 8 3-3 5-6 4-10-3 3-5 5-6 9-5-2-6-6-5-10 1-5 8-7 9-12z" fill="#fff" />
          </svg>
        </span>
        <button type="button" aria-label="输入法" className="flex w-16 justify-center">
          <svg viewBox="0 0 32 32" className="size-8" fill="none" stroke="#111" strokeWidth="2">
            <path d="M16 1v30M4 8h24v12H4z" />
          </svg>
        </button>
        <button type="button" aria-label="网络" className="flex w-16 justify-center"><Wifi className="size-9" strokeWidth={1.8} /></button>
        <button type="button" aria-label="音量" className="-ml-2 flex w-12 justify-center">
          <svg viewBox="0 0 34 32" className="h-8 w-[34px]" fill="none" stroke="#111" strokeWidth="2" strokeLinecap="round" strokeLinejoin="round">
            <path d="M2 12h5l7-7v22l-7-7H2zM18 12c2 3 2 5 0 8" />
            <path d="M22 8c4 5 4 11 0 16M26 4c6 8 6 16 0 24" stroke="#a4abb2" />
          </svg>
        </button>
        <div className="mr-[39px] ml-3 w-[120px] pb-0.5 text-right text-[23px] leading-8 whitespace-nowrap">
          <div>20:25</div>
          <div>2025/6/16</div>
        </div>
      </div>
    </footer>
  );
}

export default function App() {
  return (
    <div className={`flex min-h-screen flex-col bg-[#264460] ${SANS}`} lang="zh-CN">
      <TabStrip />
      <Toolbar />
      <div className="mx-2 mb-2 flex flex-1 flex-col overflow-hidden rounded-2xl">
        <AdminBar />
        <div className="flex flex-1">
          <Sidebar />
          <Main />
        </div>
      </div>
      <Taskbar />
    </div>
  );
}
